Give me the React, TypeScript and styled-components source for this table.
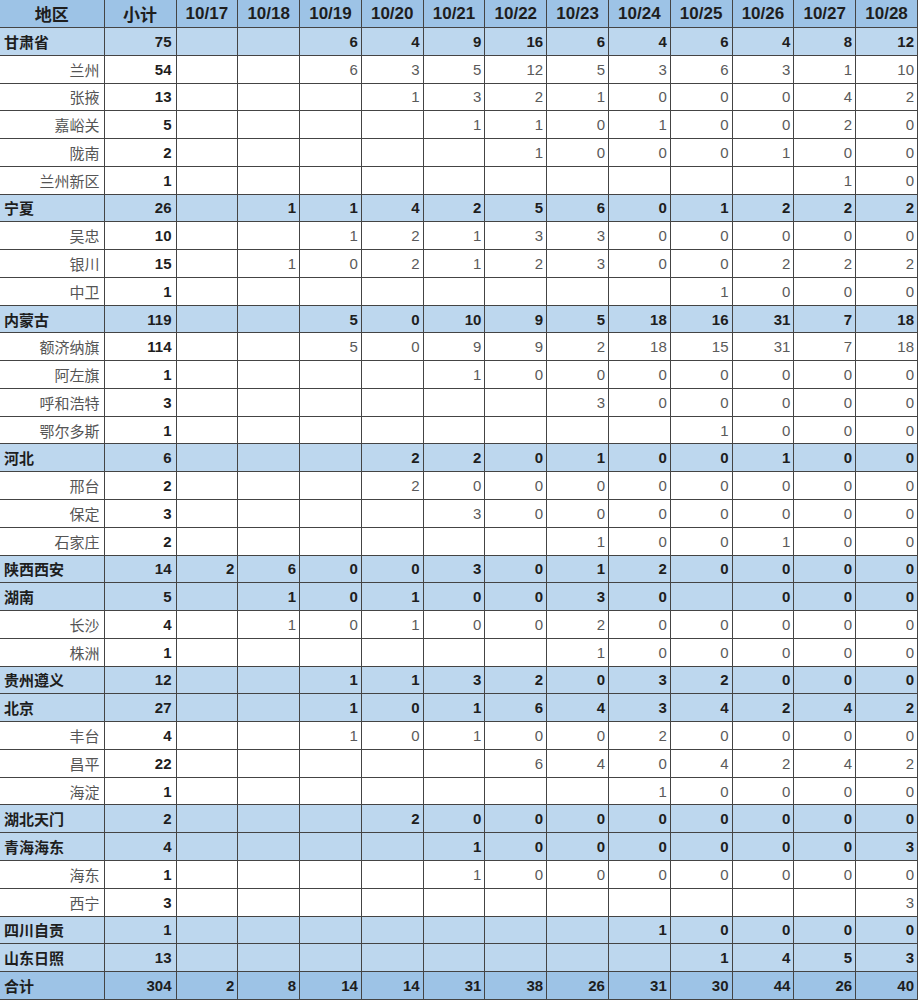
import React from 'react';
import styled, { createGlobalStyle } from 'styled-components';

type Kind = 'group' | 'child' | 'total';

interface Row {
  name: string;
  sum: number;
  days: (number | null)[];
  kind: Kind;
}

const dates = ['10/17', '10/18', '10/19', '10/20', '10/21', '10/22', '10/23', '10/24', '10/25', '10/26', '10/27', '10/28'];

const _ = null;

const rows: Row[] = [
  { name: '甘肃省', sum: 75, kind: 'group', days: [_, _, 6, 4, 9, 16, 6, 4, 6, 4, 8, 12] },
  { name: '兰州', sum: 54, kind: 'child', days: [_, _, 6, 3, 5, 12, 5, 3, 6, 3, 1, 10] },
  { name: '张掖', sum: 13, kind: 'child', days: [_, _, _, 1, 3, 2, 1, 0, 0, 0, 4, 2] },
  { name: '嘉峪关', sum: 5, kind: 'child', days: [_, _, _, _, 1, 1, 0, 1, 0, 0, 2, 0] },
  { name: '陇南', sum: 2, kind: 'child', days: [_, _, _, _, _, 1, 0, 0, 0, 1, 0, 0] },
  { name: '兰州新区', sum: 1, kind: 'child', days: [_, _, _, _, _, _, _, _, _, _, 1, 0] },
  { name: '宁夏', sum: 26, kind: 'group', days: [_, 1, 1, 4, 2, 5, 6, 0, 1, 2, 2, 2] },
  { name: '吴忠', sum: 10, kind: 'child', days: [_, _, 1, 2, 1, 3, 3, 0, 0, 0, 0, 0] },
  { name: '银川', sum: 15, kind: 'child', days: [_, 1, 0, 2, 1, 2, 3, 0, 0, 2, 2, 2] },
  { name: '中卫', sum: 1, kind: 'child', days: [_, _, _, _, _, _, _, _, 1, 0, 0, 0] },
  { name: '内蒙古', sum: 119, kind: 'group', days: [_, _, 5, 0, 10, 9, 5, 18, 16, 31, 7, 18] },
  { name: '额济纳旗', sum: 114, kind: 'child', days: [_, _, 5, 0, 9, 9, 2, 18, 15, 31, 7, 18] },
  { name: '阿左旗', sum: 1, kind: 'child', days: [_, _, _, _, 1, 0, 0, 0, 0, 0, 0, 0] },
  { name: '呼和浩特', sum: 3, kind: 'child', days: [_, _, _, _, _, _, 3, 0, 0, 0, 0, 0] },
  { name: '鄂尔多斯', sum: 1, kind: 'child', days: [_, _, _, _, _, _, _, _, 1, 0, 0, 0] },
  { name: '河北', sum: 6, kind: 'group', days: [_, _, _, 2, 2, 0, 1, 0, 0, 1, 0, 0] },
  { name: '邢台', sum: 2, kind: 'child', days: [_, _, _, 2, 0, 0, 0, 0, 0, 0, 0, 0] },
  { name: '保定', sum: 3, kind: 'child', days: [_, _, _, _, 3, 0, 0, 0, 0, 0, 0, 0] },
  { name: '石家庄', sum: 2, kind: 'child', days: [_, _, _, _, _, _, 1, 0, 0, 1, 0, 0] },
  { name: '陕西西安', sum: 14, kind: 'group', days: [2, 6, 0, 0, 3, 0, 1, 2, 0, 0, 0, 0] },
  { name: '湖南', sum: 5, kind: 'group', days: [_, 1, 0, 1, 0, 0, 3, 0, _, 0, 0, 0] },
  { name: '长沙', sum: 4, kind: 'child', days: [_, 1, 0, 1, 0, 0, 2, 0, 0, 0, 0, 0] },
  { name: '株洲', sum: 1, kind: 'child', days: [_, _, _, _, _, _, 1, 0, 0, 0, 0, 0] },
  { name: '贵州遵义', sum: 12, kind: 'group', days: [_, _, 1, 1, 3, 2, 0, 3, 2, 0, 0, 0] },
  { name: '北京', sum: 27, kind: 'group', days: [_, _, 1, 0, 1, 6, 4, 3, 4, 2, 4, 2] },
  { name: '丰台', sum: 4, kind: 'child', days: [_, _, 1, 0, 1, 0, 0, 2, 0, 0, 0, 0] },
  { name: '昌平', sum: 22, kind: 'child', days: [_, _, _, _, _, 6, 4, 0, 4, 2, 4, 2] },
  { name: '海淀', sum: 1, kind: 'child', days: [_, _, _, _, _, _, _, 1, 0, 0, 0, 0] },
  { name: '湖北天门', sum: 2, kind: 'group', days: [_, _, _, 2, 0, 0, 0, 0, 0, 0, 0, 0] },
  { name: '青海海东', sum: 4, kind: 'group', days: [_, _, _, _, 1, 0, 0, 0, 0, 0, 0, 3] },
  { name: '海东', sum: 1, kind: 'child', days: [_, _, _, _, 1, 0, 0, 0, 0, 0, 0, 0] },
  { name: '西宁', sum: 3, kind: 'child', days: [_, _, _, _, _, _, _, _, _, _, _, 3] },
  { name: '四川自贡', sum: 1, kind: 'group', days: [_, _, _, _, _, _, _, 1, 0, 0, 0, 0] },
  { name: '山东日照', sum: 13, kind: 'group', days: [_, _, _, _, _, _, _, _, 1, 4, 5, 3] },
  { name: '合计', sum: 304, kind: 'total', days: [2, 8, 14, 14, 31, 38, 26, 31, 30, 44, 26, 40] },
];

const GlobalStyle = createGlobalStyle`
  html, body {
    margin: 0;
    padding: 0;
    background: #ffffff;
  }
  body {
    font-family: "Liberation Sans", "Noto Sans CJK SC", sans-serif;
  }
`;

const rowBg = {
  group: '#bdd7ee',
  child: '#ffffff',
  total: '#9dc3e6',
};

const Sheet = styled.table`
  width: 918px;
  height: 1000px;
  border-collapse: collapse;
  table-layout: fixed;
  font-family: "Liberation Sans", "Noto Sans CJK SC", sans-serif;
  font-size: 15px;
  color: #1e1e1e;
`;

const HeadRow = styled.tr`
  background: #9dc3e6;
`;

const HeadCell = styled.th`
  height: 27px;
  padding: 0;
  border: 1px solid #444444;
  border-top: none;
  font-size: 17px;
  font-weight: bold;
  text-align: center;
  color: #1e1e1e;

  &:first-child {
    border-left: none;
  }
`;

const BodyRow = styled.tr<{ $kind: Kind }>`
  background: ${(p) => rowBg[p.$kind]};
`;

const NameCell = styled.td<{ $kind: Kind }>`
  height: 26px;
  padding: 0 4px;
  border: 1px solid #444444;
  border-left: none;
  white-space: nowrap;
  text-align: ${(p) => (p.$kind === 'child' ? 'right' : 'left')};
  font-weight: ${(p) => (p.$kind === 'child' ? 'normal' : 'bold')};
  color: ${(p) => (p.$kind === 'child' ? '#555555' : '#1e1e1e')};
`;

const SumCell = styled.td`
  padding: 0 4px;
  border: 1px solid #444444;
  text-align: right;
  font-weight: bold;
  color: #1e1e1e;
`;

const DayCell = styled.td<{ $kind: Kind }>`
  padding: 0 3px;
  border: 1px solid #444444;
  text-align: right;
  font-weight: ${(p) => (p.$kind === 'child' ? 'normal' : 'bold')};
  color: ${(p) => (p.$kind === 'child' ? '#5a5a5a' : '#1e1e1e')};
`;

const App = () => {
  return (
    <>
      <GlobalStyle />
      <Sheet>
        <colgroup>
          <col style={{ width: 104 }} />
          <col style={{ width: 72 }} />
          {dates.map((d) => (
            <col key={d} />
          ))}
        </colgroup>
        <thead>
          <HeadRow>
            <HeadCell>地区</HeadCell>
            <HeadCell>小计</HeadCell>
            {dates.map((d) => (
              <HeadCell key={d}>{d}</HeadCell>
            ))}
          </HeadRow>
        </thead>
        <tbody>
          {rows.map((row) => (
            <BodyRow key={row.name + row.kind} $kind={row.kind}>
              <NameCell $kind={row.kind}>{row.name}</NameCell>
              <SumCell>{row.sum}</SumCell>
              {row.days.map((v, idx) => (
                <DayCell key={idx} $kind={row.kind}>
                  {v === null ? '' : v}
                </DayCell>
              ))}
            </BodyRow>
          ))}
        </tbody>
      </Sheet>
    </>
  );
};

export default App;
